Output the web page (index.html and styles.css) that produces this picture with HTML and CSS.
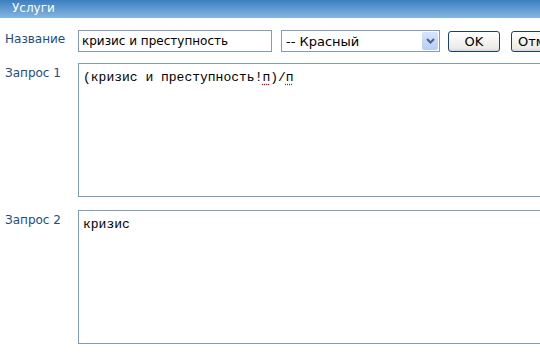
FILE: index.html
```html
<!DOCTYPE html>
<html lang="ru">
<head>
  <meta charset="UTF-8">
  <title>Услуги</title>
  <link rel="stylesheet" href="styles.css">
</head>
<body>

<div class="header">Услуги</div>

<div class="form">
  <div class="label label-top">Название</div>
  <div class="controls">
    <input class="name-input" type="text" value="кризис и преступность">
    <div class="select">
      <span class="select-text">-- Красный</span>
      <span class="select-arrow">
        <svg width="9" height="6" viewBox="0 0 9 6"><path d="M1 1 L4.5 4.5 L8 1" fill="none" stroke="#4d6185" stroke-width="2"/></svg>
      </span>
    </div>
    <button class="btn">OK</button>
    <button class="btn">Отмена</button>
  </div>

  <div class="label">Запрос 1</div>
  <div class="query">(кризис и преступность!<span class="err">п</span>)/<span class="err">п</span></div>

  <div class="label">Запрос 2</div>
  <div class="query">кризис</div>
</div>

</body>
</html>
```

FILE: styles.css
```css
body {
  margin: 0;
  overflow: hidden;
  font-family: "DejaVu Sans", Verdana, sans-serif;
  background: #fff;
}
.header {
  height: 18px;
  line-height: 17px;
  padding-left: 12px;
  color: #fff;
  font-size: 12px;
  background: linear-gradient(#3c7fc0, #86b6e0);
}
.form {
  display: grid;
  grid-template-columns: 73px auto;
  row-gap: 11px;
  padding: 12px 0 0 5px;
  width: 620px;
}
.label {
  color: #1d4d7e;
  font-size: 12px;
  padding-top: 3px;
}
.label-top {
  padding-top: 2px;
}
.controls {
  display: flex;
  align-items: center;
  gap: 8px;
  height: 22px;
}
.name-input {
  box-sizing: border-box;
  width: 194px;
  height: 22px;
  margin: 0 1px 0 0;
  padding: 0 3px;
  border: 1px solid #7f9db9;
  font-family: "DejaVu Sans", Verdana, sans-serif;
  font-size: 12px;
  color: #000;
}
.select {
  box-sizing: border-box;
  width: 159px;
  height: 22px;
  border: 1px solid #7f9db9;
  display: flex;
  align-items: center;
  justify-content: space-between;
  padding: 0 1px 0 4px;
  font-size: 13px;
}
.select-arrow {
  width: 16px;
  height: 18px;
  background: linear-gradient(#d6e3fb, #b9cdf6);
  border-radius: 2px;
  display: flex;
  align-items: center;
  justify-content: center;
}
.btn {
  box-sizing: border-box;
  height: 21px;
  width: 52px;
  padding: 0 6px;
  border: 1px solid #1c3f6b;
  border-radius: 3px;
  background: linear-gradient(#ffffff, #ecebe6 85%, #d8d6cc);
  font-family: "DejaVu Sans", Verdana, sans-serif;
  font-size: 13px;
  color: #000;
  flex-shrink: 0;
}
.btn + .btn {
  width: 70px;
  margin-left: 3px;
  text-align: left;
}
.query {
  box-sizing: border-box;
  width: 480px;
  height: 134px;
  border: 1px solid #7f9db9;
  padding: 6px 4px;
  font-family: "Liberation Mono", "Courier New", monospace;
  font-size: 13px;
  line-height: 15px;
  color: #000;
  margin-bottom: 2px;
}
.err {
  text-decoration: underline dotted #e00000;
  text-underline-offset: 3px;
}
```
